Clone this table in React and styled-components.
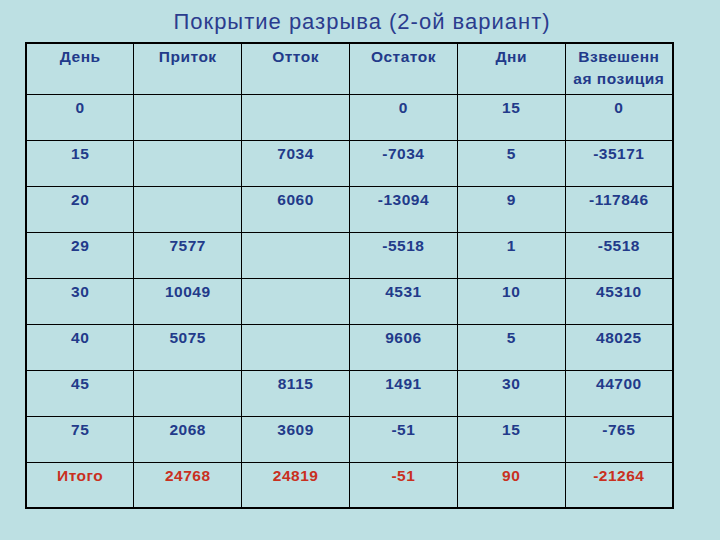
import React from 'react';
import styled, { createGlobalStyle } from 'styled-components';

const GlobalStyle = createGlobalStyle`
  html, body {
    margin: 0;
    padding: 0;
    background: #bde0e3;
  }
  body {
    font-family: "Liberation Sans", Arial, sans-serif;
  }
`;

const Page = styled.div`
  width: 720px;
  height: 540px;
  background: #bde0e3;
  overflow: hidden;
`;

const Title = styled.h1`
  margin: 0;
  height: 42px;
  padding: 10px 0 0 4px;
  box-sizing: border-box;
  text-align: center;
  font-size: 22px;
  font-weight: normal;
  line-height: 24px;
  letter-spacing: 1px;
  color: #2b3c8e;
`;

const Table = styled.table`
  margin-left: 25px;
  width: 649px;
  border-collapse: collapse;
  border: 2px solid #000;
  table-layout: fixed;
`;

const Row = styled.tr`
  height: ${(p) => (p.$head ? '51px' : '46px')};
`;

const Cell = styled.td`
  border: 1px solid #000;
  padding: ${(p) => (p.$head ? '2px' : '3px')} 0 0;
  vertical-align: top;
  text-align: center;
  font-size: 15.5px;
  font-weight: bold;
  line-height: ${(p) => (p.$head ? '22px' : '20px')};
  color: ${(p) => (p.$total ? '#c9301f' : '#223a8a')};
  letter-spacing: 0.5px;
`;

const HeadCell = styled(Cell).attrs({ as: 'th', $head: true })``;

const rows = [
  ['0', '', '', '0', '15', '0'],
  ['15', '', '7034', '-7034', '5', '-35171'],
  ['20', '', '6060', '-13094', '9', '-117846'],
  ['29', '7577', '', '-5518', '1', '-5518'],
  ['30', '10049', '', '4531', '10', '45310'],
  ['40', '5075', '', '9606', '5', '48025'],
  ['45', '', '8115', '1491', '30', '44700'],
  ['75', '2068', '3609', '-51', '15', '-765'],
];

const total = ['Итого', '24768', '24819', '-51', '90', '-21264'];

export default function App() {
  return (
    <Page>
      <GlobalStyle />
      <Title>Покрытие разрыва (2-ой вариант)</Title>
      <Table>
        <thead>
          <Row $head>
            <HeadCell>День</HeadCell>
            <HeadCell>Приток</HeadCell>
            <HeadCell>Отток</HeadCell>
            <HeadCell>Остаток</HeadCell>
            <HeadCell>Дни</HeadCell>
            <HeadCell>
              Взвешенн
              <br />
              ая позиция
            </HeadCell>
          </Row>
        </thead>
        <tbody>
          {rows.map((r, i) => (
            <Row key={i}>
              {r.map((v, j) => (
                <Cell key={j}>{v}</Cell>
              ))}
            </Row>
          ))}
          <Row>
            {total.map((v, j) => (
              <Cell key={j} $total>
                {v}
              </Cell>
            ))}
          </Row>
        </tbody>
      </Table>
    </Page>
  );
}
